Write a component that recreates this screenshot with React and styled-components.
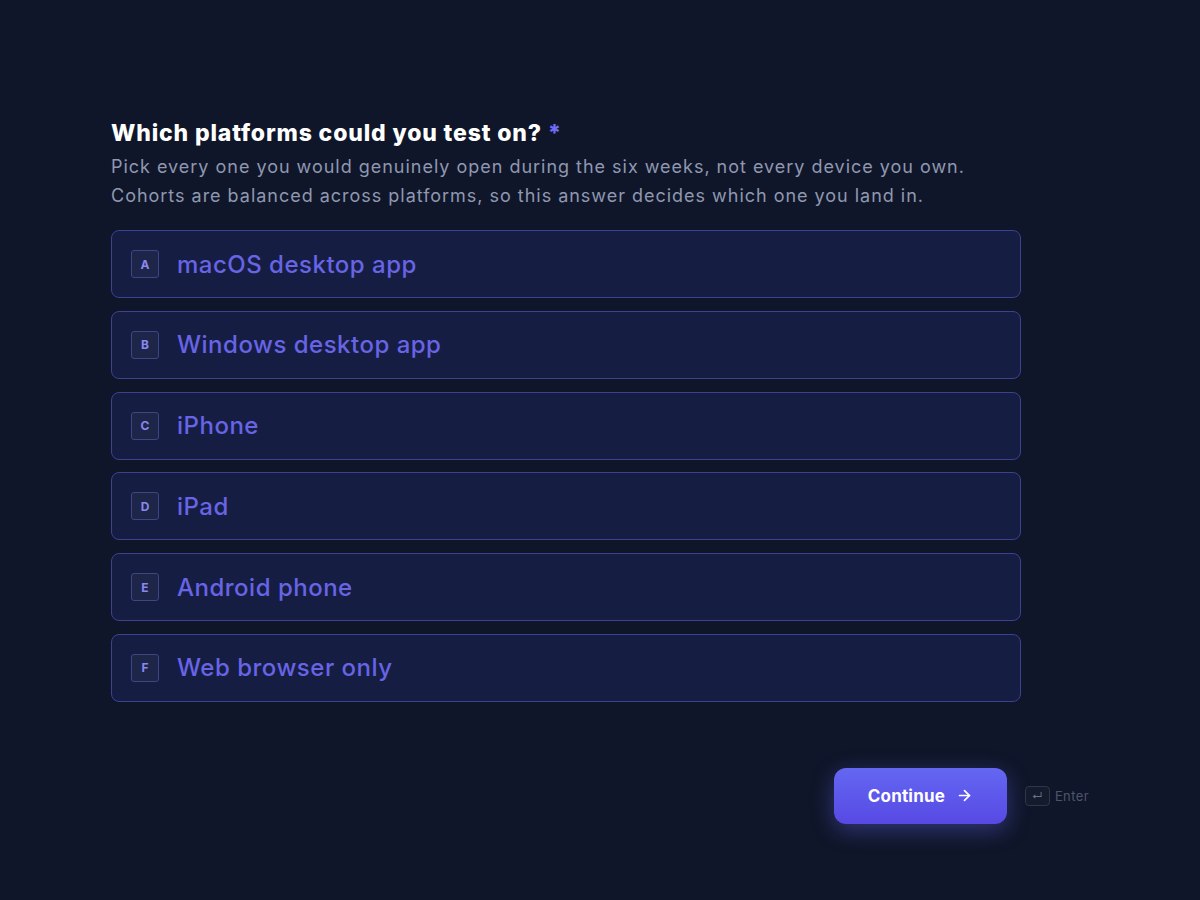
import React from 'react';
import styled, { createGlobalStyle } from 'styled-components';

const GlobalStyle = createGlobalStyle`
  html, body {
    margin: 0;
    padding: 0;
    background: #0f1629;
  }
  body {
    font-family: 'Inter', 'Noto Sans', sans-serif;
  }
`;

const options = [
  { key: 'A', label: 'macOS desktop app' },
  { key: 'B', label: 'Windows desktop app' },
  { key: 'C', label: 'iPhone' },
  { key: 'D', label: 'iPad' },
  { key: 'E', label: 'Android phone' },
  { key: 'F', label: 'Web browser only' },
];

const App = () => {
  return (
    <>
      <GlobalStyle />
      <Page>
        <Question>
          <Title>
            Which platforms could you test on? <Star>*</Star>
          </Title>
          <Description>
            Pick every one you would genuinely open during the six weeks, not every device you own.
            <br />
            Cohorts are balanced across platforms, so this answer decides which one you land in.
          </Description>
          <OptionList>
            {options.map((o) => (
              <Option key={o.key}>
                <KeyBadge>{o.key}</KeyBadge>
                <OptionLabel>{o.label}</OptionLabel>
              </Option>
            ))}
          </OptionList>
        </Question>
        <Footer>
          <ContinueButton>
            Continue
            <svg width="17" height="17" viewBox="0 0 24 24" fill="none" stroke="currentColor" strokeWidth="2.4" strokeLinecap="round" strokeLinejoin="round">
              <path d="M5 12h14" />
              <path d="M12 5l7 7-7 7" />
            </svg>
          </ContinueButton>
          <Hint>
            <HintKey>↵</HintKey>
            Enter
          </Hint>
        </Footer>
      </Page>
    </>
  );
};

const Page = styled.div`
  width: 1200px;
  height: 900px;
  box-sizing: border-box;
  padding: 118px 0 0 111px;
  display: flex;
  flex-direction: column;
`;

const Question = styled.div`
  width: 910px;
`;

const Title = styled.h1`
  margin: 0;
  font-size: 23px;
  line-height: 30px;
  font-weight: 800;
  color: #ffffff;
  letter-spacing: 0.85px;
`;

const Star = styled.span`
  color: #6f6cf0;
`;

const Description = styled.p`
  margin: 4px 0 0;
  font-size: 18px;
  line-height: 29px;
  color: #8f98b0;
  letter-spacing: 0.98px;
`;

const OptionList = styled.div`
  margin-top: 20px;
  display: flex;
  flex-direction: column;
  gap: 12.8px;
`;

const Option = styled.div`
  height: 68px;
  box-sizing: border-box;
  border: 1.5px solid #3c4190;
  border-radius: 8px;
  background: #161d42;
  display: flex;
  align-items: center;
  padding-left: 19px;
  gap: 18px;
`;

const KeyBadge = styled.span`
  width: 28px;
  height: 28px;
  box-sizing: border-box;
  border: 1.5px solid #3f4684;
  border-radius: 3px;
  background: #1d2548;
  display: flex;
  align-items: center;
  justify-content: center;
  font-size: 12px;
  font-weight: 700;
  color: #8a87f0;
`;

const OptionLabel = styled.span`
  font-size: 24px;
  font-weight: 500;
  color: #6764e6;
  letter-spacing: 0.5px;
`;

const Footer = styled.div`
  margin-top: 66px;
  width: 978px;
  display: flex;
  justify-content: flex-end;
  align-items: center;
  gap: 18px;
`;

const ContinueButton = styled.button`
  width: 173px;
  height: 56px;
  border: none;
  border-radius: 12px;
  background: linear-gradient(180deg, #6467f2 0%, #5749e4 100%);
  box-shadow: 0 6px 22px rgba(99, 102, 241, 0.4);
  color: #ffffff;
  font-family: inherit;
  font-size: 17px;
  font-weight: 700;
  letter-spacing: 0.2px;
  display: flex;
  align-items: center;
  justify-content: center;
  gap: 11px;
  cursor: pointer;
`;

const Hint = styled.div`
  display: flex;
  align-items: center;
  gap: 5px;
  font-size: 13px;
  letter-spacing: 0.4px;
  color: #4d556c;
`;

const HintKey = styled.span`
  width: 25px;
  height: 20px;
  box-sizing: border-box;
  border: 1px solid #2f3648;
  border-radius: 4px;
  background: #141b2c;
  display: flex;
  align-items: center;
  justify-content: center;
  font-size: 11px;
  color: #6a7188;
`;

export default App;
